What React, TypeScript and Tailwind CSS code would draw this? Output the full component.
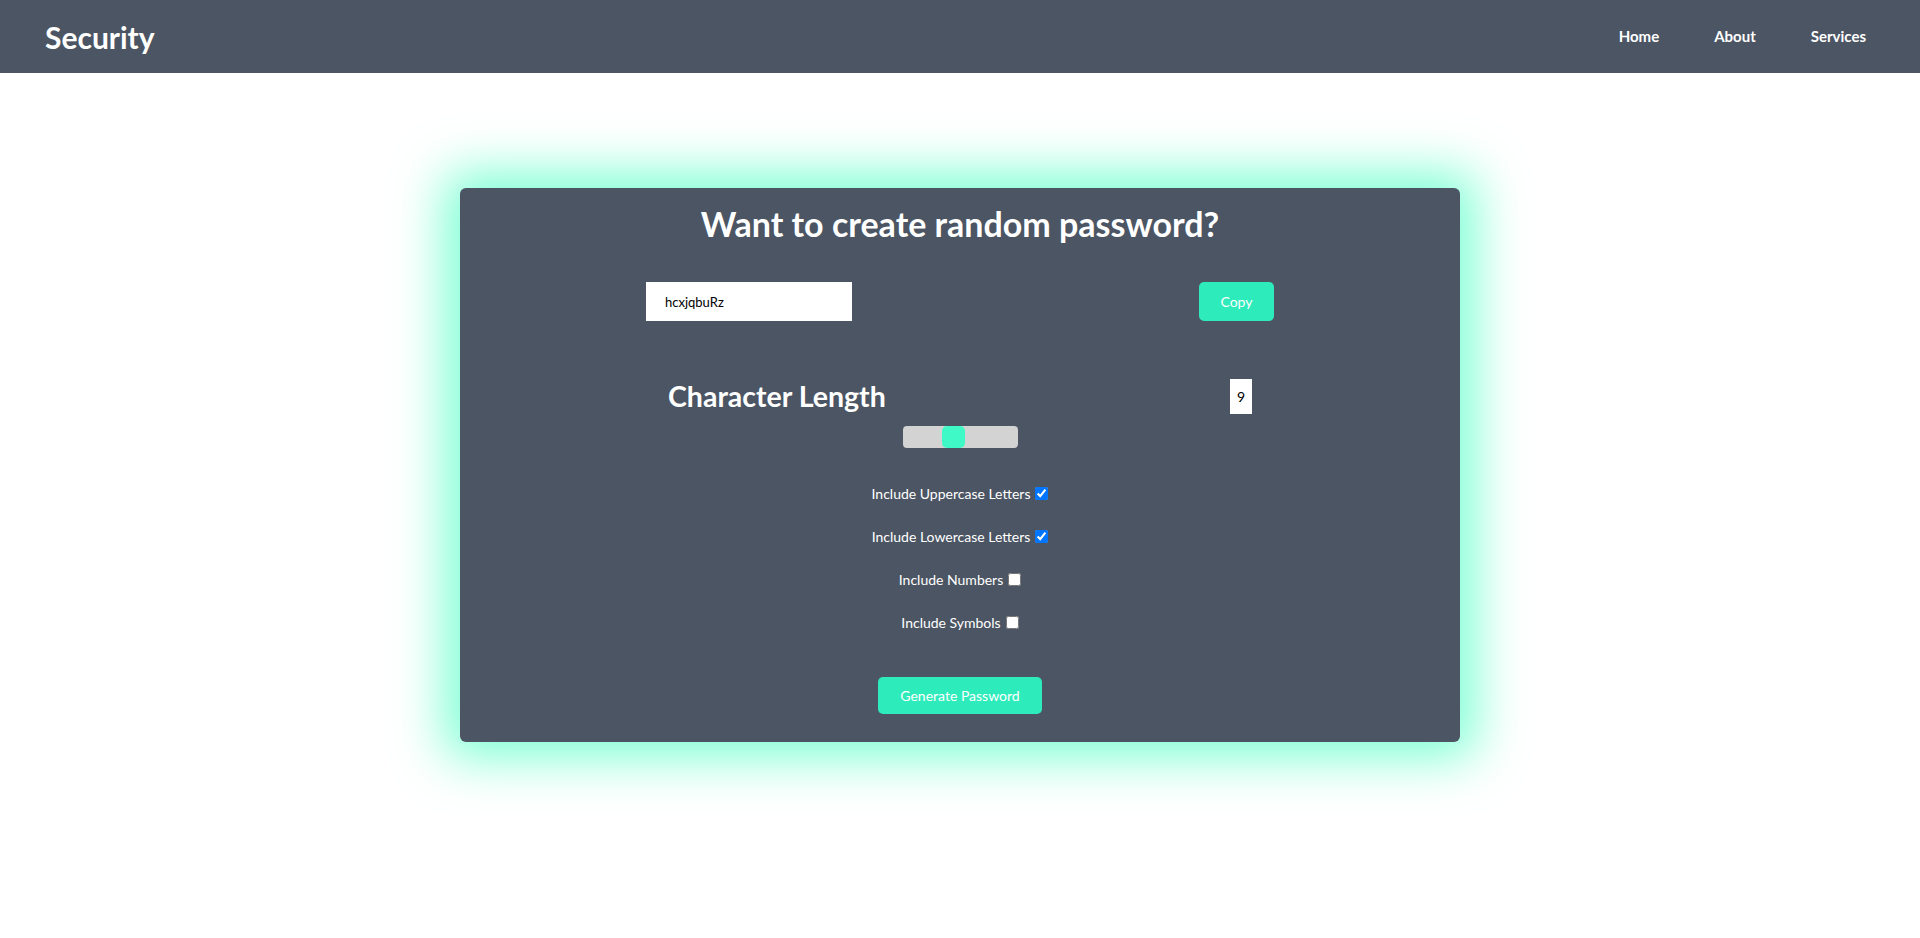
import { useState } from "react";

const options = [
  { label: "Include Uppercase Letters", checked: true },
  { label: "Include Lowercase Letters", checked: true },
  { label: "Include Numbers", checked: false },
  { label: "Include Symbols", checked: false },
];

export default function App() {
  const [password] = useState("hcxjqbuRz");
  const [length] = useState(9);

  return (
    <div className="min-h-screen bg-white font-['Lato','Open_Sans',sans-serif]">
      {/* Navbar */}
      <header className="h-[73px] bg-[#4b5563] flex items-center justify-between pl-[45px] pr-[54px]">
        <h1 className="text-[30px] font-bold text-white leading-none">Security</h1>
        <nav className="flex gap-[55px] text-[15px] font-bold text-white">
          <a href="#">Home</a>
          <a href="#">About</a>
          <a href="#">Services</a>
        </nav>
      </header>

      {/* Generator card */}
      <main className="pt-[115px] flex justify-center">
        <div className="w-[1000px] h-[554px] bg-[#4b5563] rounded-md shadow-[0_0_50px_16px_#7fffd4] flex flex-col items-center text-white">
          <h2 className="mt-[15px] text-[34px] leading-[42px] font-bold">
            Want to create random password?
          </h2>

          {/* Password + copy */}
          <div className="mt-[37px] w-full px-[186px] flex justify-between">
            <input
              readOnly
              value={password}
              className="w-[206px] h-[39px] bg-white text-black text-[13px] pl-[19px] outline-none"
            />
            <button className="w-[75px] h-[39px] rounded-[5px] bg-[#2eebbb] text-white text-[14px]">
              Copy
            </button>
          </div>

          {/* Length */}
          <div className="mt-[58px] w-full px-[208px] flex justify-between items-center h-[35px]">
            <h3 className="text-[28.5px] font-bold leading-[35px]">Character Length</h3>
            <div className="w-[22px] h-[35px] bg-white text-black text-[14px] flex items-center justify-center">
              {length}
            </div>
          </div>

          <div className="mt-[12px] w-[115px] h-[22px] rounded-[4px] bg-[#d3d3d3] flex pl-[39px]">
            <div className="w-[23px] h-full rounded-[5px] bg-[#3ffac6]" />
          </div>

          {/* Options */}
          <div className="mt-[35px] flex flex-col items-center gap-[23px]">
            {options.map((o) => (
              <label key={o.label} className="h-[20px] flex items-center text-[14px]">
                {o.label}
                <input
                  type="checkbox"
                  defaultChecked={o.checked}
                  className="ml-[5px] w-[13px] h-[13px]"
                />
              </label>
            ))}
          </div>

          <button className="mt-[45px] w-[164px] h-[37px] rounded-[5px] bg-[#2eebbb] text-white text-[14px]">
            Generate Password
          </button>
        </div>
      </main>
    </div>
  );
}
